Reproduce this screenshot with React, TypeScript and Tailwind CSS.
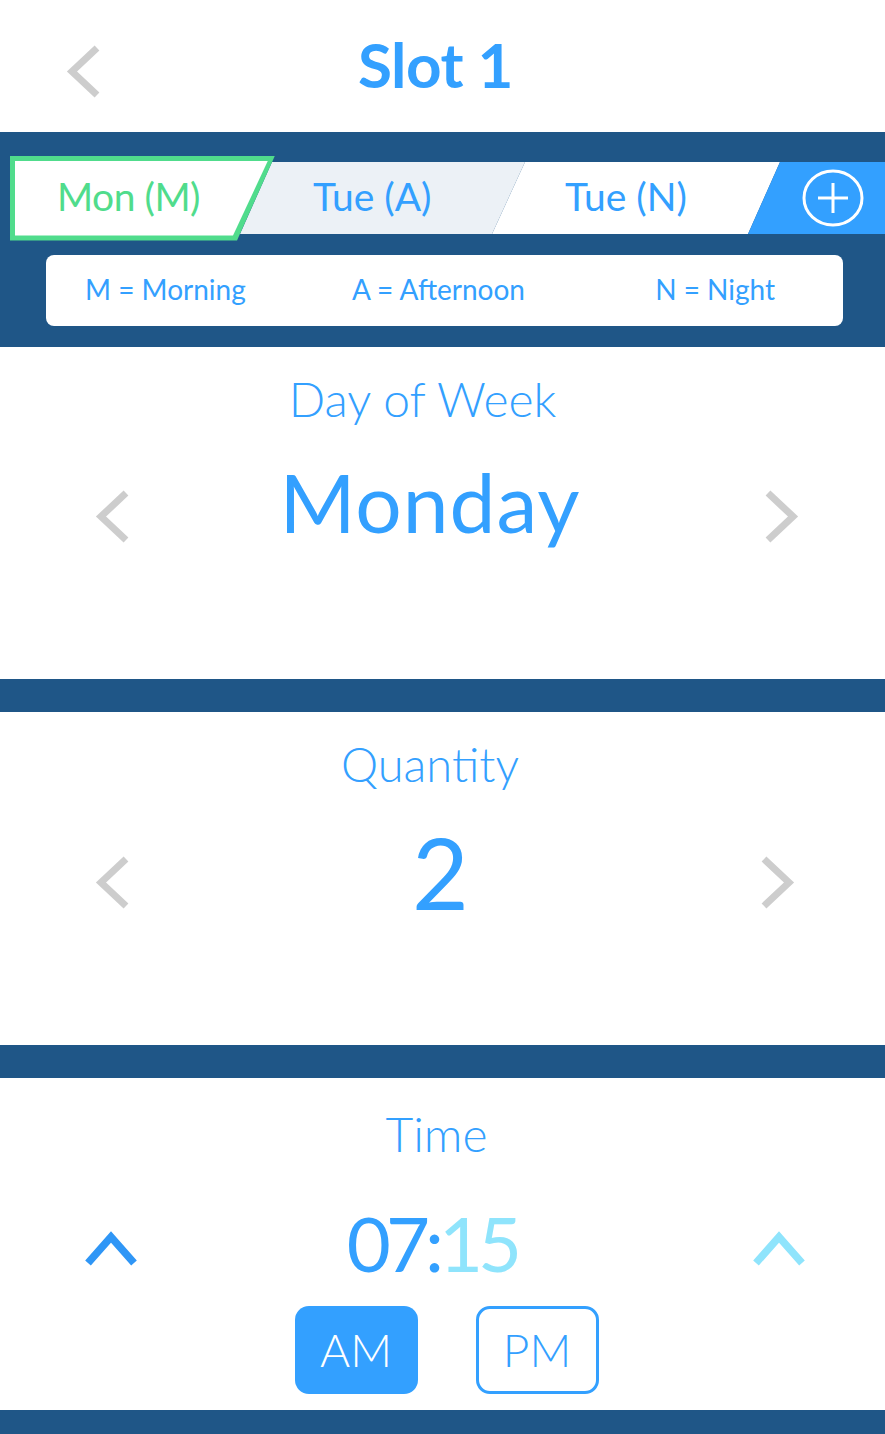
import React from "react";

const ChevronLeft = ({ color = "#cdcdcd" }: { color?: string }) => (
  <svg width="36" height="53" viewBox="0 0 36 53" className="shrink-0" overflow="visible">
    <polyline points="33,3 8,26.5 33,50" fill="none" stroke={color} strokeWidth="7" strokeLinejoin="miter" />
  </svg>
);

const ChevronRight = ({ color = "#cdcdcd" }: { color?: string }) => (
  <svg width="36" height="53" viewBox="0 0 36 53" className="shrink-0" overflow="visible">
    <polyline points="3,3 28,26.5 3,50" fill="none" stroke={color} strokeWidth="7" strokeLinejoin="miter" />
  </svg>
);

const ChevronUp = ({ color }: { color: string }) => (
  <svg width="52" height="35" viewBox="0 0 52 35" className="shrink-0" overflow="visible">
    <polyline points="3,32 26,6 49,32" fill="none" stroke={color} strokeWidth="7.5" strokeLinejoin="miter" />
  </svg>
);

export default function App() {
  return (
    <div className="w-[885px] min-h-[1434px] bg-[#1f5687] font-['Lato',sans-serif] text-[#33a0ff]">
      {/* Header */}
      <div className="h-[132px] bg-white grid grid-cols-[66px_34px_1fr_114px] items-center">
        <div />
        <svg width="34" height="51" viewBox="0 0 34 51" overflow="visible" className="mt-[10px]">
          <polyline points="31,2 6,25.5 31,49" fill="none" stroke="#cdcdcd" strokeWidth="7" />
        </svg>
        <div className="text-center text-[62px] font-bold leading-none tracking-[-0.5px] pb-[4px]">Slot 1</div>
        <div />
      </div>

      {/* Tabs band */}
      <div className="pt-[30px] pb-[21px]">
        <div className="flex h-[72px] items-center">
          <div className="relative z-10 ml-[10px] w-[265px] h-[85px] shrink-0 bg-[#50dc8c] p-[5px] [clip-path:polygon(0_0,100%_0,calc(100%-38px)_100%,0_100%)]">
            <div className="h-full w-full bg-white flex items-center pl-[42px] [clip-path:polygon(0_0,calc(100%-2px)_0,calc(100%-37px)_100%,0_100%)]">
              <span className="text-[39px] text-[#50dc8c] leading-none tracking-[-0.5px] pb-[4px]">Mon (M)</span>
            </div>
          </div>
          <div className="-ml-[35px] w-[285px] h-[72px] shrink-0 bg-[#ecf1f6] flex items-center pl-[73px] [clip-path:polygon(32px_0,100%_0,calc(100%-33px)_100%,0_100%)]">
            <span className="text-[39px] leading-none pb-[4px]">Tue (A)</span>
          </div>
          <div className="-ml-[33px] w-[288px] h-[72px] shrink-0 bg-white flex items-center pl-[73px] [clip-path:polygon(33px_0,100%_0,calc(100%-32px)_100%,0_100%)]">
            <span className="text-[39px] leading-none pb-[4px]">Tue (N)</span>
          </div>
          <div className="-ml-[32px] flex-1 h-[72px] bg-[#33a0ff] flex items-center pl-[54px] [clip-path:polygon(32px_0,100%_0,100%_100%,0_100%)]">
            <svg width="62" height="58" viewBox="0 0 62 58">
              <ellipse cx="31" cy="29" rx="29" ry="27" fill="none" stroke="white" strokeWidth="3" />
              <line x1="16" y1="29" x2="46" y2="29" stroke="white" strokeWidth="3" />
              <line x1="31" y1="14" x2="31" y2="44" stroke="white" strokeWidth="3" />
            </svg>
          </div>
        </div>
        <div className="mt-[21px] ml-[46px] w-[797px] h-[71px] bg-white rounded-[8px] flex items-center justify-between pl-[39px] pr-[68px] text-[28px] leading-none pb-[4px]">
          <span>M = Morning</span>
          <span className="mr-[24px]">A = Afternoon</span>
          <span>N = Night</span>
        </div>
      </div>

      {/* Day of week */}
      <div className="h-[332px] bg-white pt-[28px]">
        <div className="text-center text-[48px] font-light leading-none pr-[40px]">Day of Week</div>
        <div className="mt-[37px] flex items-start pl-[93px] pr-[84px]">
          <div className="mt-[30px]"><ChevronLeft /></div>
          <div className="flex-1 text-center text-[82px] leading-none tracking-[1px] pr-[34px]">Monday</div>
          <div className="mt-[30px]"><ChevronRight /></div>
        </div>
      </div>

      <div className="h-[33px]" />

      {/* Quantity */}
      <div className="h-[333px] bg-white pt-[29px]">
        <div className="text-center text-[47px] font-light leading-none pr-[25px]">Quantity</div>
        <div className="mt-[35px] flex items-start pl-[93px] pr-[88px]">
          <div className="mt-[33px]"><ChevronLeft /></div>
          <div className="flex-1 text-center text-[98px] leading-none pr-[9px]">2</div>
          <div className="mt-[33px]"><ChevronRight /></div>
        </div>
      </div>

      <div className="h-[33px]" />

      {/* Time */}
      <div className="h-[332px] bg-white pt-[32px]">
        <div className="text-center text-[48px] font-light leading-none pr-[12px]">Time</div>
        <div className="mt-[47px] flex items-start pl-[85px] pr-[80px]">
          <div className="mt-[26px]"><ChevronUp color="#2f96f6" /></div>
          <div className="flex-1 text-center text-[76px] leading-none tracking-[-5px] pr-[26px]">
            <span>07:</span>
            <span className="text-[#8fe4fc]">15</span>
          </div>
          <div className="mt-[26px]"><ChevronUp color="#8fe4fc" /></div>
        </div>
        <div className="mt-[25px] flex justify-center gap-[58px] pl-[8px]">
          <div className="w-[123px] h-[88px] rounded-[14px] bg-[#33a0ff] text-white flex items-center justify-center text-[46px] font-light leading-none">AM</div>
          <div className="w-[123px] h-[88px] rounded-[14px] border-[3px] border-[#33a0ff] flex items-center justify-center text-[46px] font-light leading-none">PM</div>
        </div>
      </div>
    </div>
  );
}
